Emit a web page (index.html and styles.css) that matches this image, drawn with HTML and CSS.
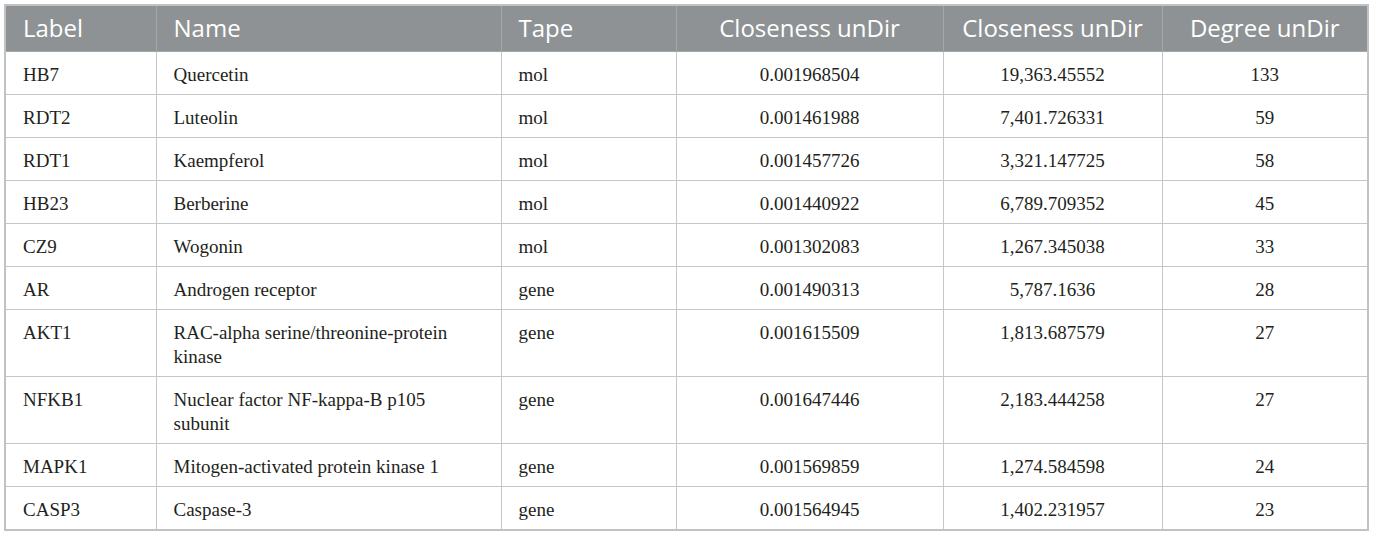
FILE: index.html
```html
<!DOCTYPE html>
<html>
<head>
<meta charset="utf-8">
<link rel="stylesheet" href="styles.css">
</head>
<body>
<table class="data">
  <colgroup>
    <col class="c1"><col class="c2"><col class="c3"><col class="c4"><col class="c5"><col class="c6">
  </colgroup>
  <thead>
    <tr>
      <th class="left">Label</th>
      <th class="left">Name</th>
      <th class="left">Tape</th>
      <th>Closeness unDir</th>
      <th>Closeness unDir</th>
      <th>Degree unDir</th>
    </tr>
  </thead>
  <tbody>
    <tr><td>HB7</td><td>Quercetin</td><td>mol</td><td class="num">0.001968504</td><td class="num">19,363.45552</td><td class="num">133</td></tr>
    <tr><td>RDT2</td><td>Luteolin</td><td>mol</td><td class="num">0.001461988</td><td class="num">7,401.726331</td><td class="num">59</td></tr>
    <tr><td>RDT1</td><td>Kaempferol</td><td>mol</td><td class="num">0.001457726</td><td class="num">3,321.147725</td><td class="num">58</td></tr>
    <tr><td>HB23</td><td>Berberine</td><td>mol</td><td class="num">0.001440922</td><td class="num">6,789.709352</td><td class="num">45</td></tr>
    <tr><td>CZ9</td><td>Wogonin</td><td>mol</td><td class="num">0.001302083</td><td class="num">1,267.345038</td><td class="num">33</td></tr>
    <tr><td>AR</td><td>Androgen receptor</td><td>gene</td><td class="num">0.001490313</td><td class="num">5,787.1636</td><td class="num">28</td></tr>
    <tr><td>AKT1</td><td>RAC-alpha serine/threonine-protein kinase</td><td>gene</td><td class="num">0.001615509</td><td class="num">1,813.687579</td><td class="num">27</td></tr>
    <tr><td>NFKB1</td><td>Nuclear factor NF-kappa-B p105 subunit</td><td>gene</td><td class="num">0.001647446</td><td class="num">2,183.444258</td><td class="num">27</td></tr>
    <tr><td>MAPK1</td><td>Mitogen-activated protein kinase 1</td><td>gene</td><td class="num">0.001569859</td><td class="num">1,274.584598</td><td class="num">24</td></tr>
    <tr><td>CASP3</td><td>Caspase-3</td><td>gene</td><td class="num">0.001564945</td><td class="num">1,402.231957</td><td class="num">23</td></tr>
  </tbody>
</table>
</body>
</html>
```

FILE: styles.css
```css
html, body {
  margin: 0;
  padding: 0;
  background: #ffffff;
}
body {
  padding: 4px 6px 0 4px;
}
.data {
  border-collapse: collapse;
  table-layout: fixed;
  width: 1365px;
  border: 2px solid #bfc3c3;
}
.c1 { width: 151px; }
.c2 { width: 345px; }
.c3 { width: 175px; }
.c4 { width: 267px; }
.c5 { width: 219px; }
.c6 { width: 206px; }
.data th {
  background: #8e9294;
  color: #ffffff;
  font-family: "Open Sans", "Noto Sans", sans-serif;
  font-weight: 400;
  font-size: 24px;
  line-height: 28px;
  height: 46px;
  padding: 0 8px;
  text-align: center;
  vertical-align: middle;
  border: 1px solid #a3a7a8;
  border-top: none;
  box-sizing: border-box;
  white-space: nowrap;
}
.data th.left {
  text-align: left;
  padding-left: 17px;
}
.data td {
  font-family: "Liberation Serif", "Times New Roman", serif;
  font-size: 19px;
  line-height: 24px;
  color: #231f20;
  padding: 11px 30px 7px 17px;
  vertical-align: top;
  text-align: left;
  border: 1px solid #c4c7c7;
}
.data td.num {
  text-align: center;
  padding-left: 16px;
  padding-right: 16px;
}
```
